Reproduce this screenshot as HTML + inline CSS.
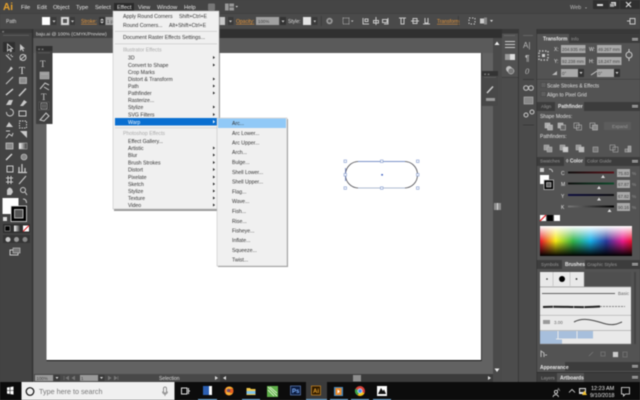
<!DOCTYPE html>
<html><head><meta charset="utf-8"><style>
html,body{margin:0;padding:0;width:640px;height:400px;overflow:hidden;background:#444}
svg{display:block;font-family:"Liberation Sans",sans-serif;filter:blur(.4px)}
.m{font-size:5.7px;fill:#e6e6e6}
.c{font-size:5px;fill:#ddd}
.o{font-size:5px;fill:#e8973a;text-decoration:underline}
.d{font-size:5.2px;fill:#333}
.h{font-size:5.2px;fill:#aaa}
.p{font-size:5px;fill:#e2e2e2}
.b{font-size:5px;fill:#e8e8e8;font-weight:bold}
.g{font-size:4.6px;fill:#999}
.v{font-size:4.4px;fill:#444}
.i{fill:none;stroke:#c9c9c9;stroke-width:1}
.f{fill:#c9c9c9}
</style></head><body>
<svg width="640" height="400" viewBox="0 0 640 400">
<defs>
<linearGradient id="sp" x1="0" x2="1" y1="0" y2="0">
<stop offset="0" stop-color="#e8112d"/><stop offset=".17" stop-color="#f6eb14"/><stop offset=".36" stop-color="#35b44a"/><stop offset=".55" stop-color="#16b0e8"/><stop offset=".72" stop-color="#2b3b9c"/><stop offset=".9" stop-color="#ec1c8c"/><stop offset="1" stop-color="#e8112d"/>
</linearGradient>
<linearGradient id="wh" x1="0" x2="0" y1="0" y2="1"><stop offset="0" stop-color="#fff"/><stop offset="1" stop-color="#fff" stop-opacity="0"/></linearGradient>
<linearGradient id="bk" x1="0" x2="0" y1="0" y2="1"><stop offset="0" stop-color="#000" stop-opacity="0"/><stop offset="1" stop-color="#000"/></linearGradient>
<linearGradient id="sc" x1="0" x2="1" y1="0" y2="0"><stop offset="0" stop-color="#111"/><stop offset="1" stop-color="#5a1018"/></linearGradient>
<linearGradient id="sm" x1="0" x2="1" y1="0" y2="0"><stop offset="0" stop-color="#111"/><stop offset="1" stop-color="#0f4a2a"/></linearGradient>
<linearGradient id="sy" x1="0" x2="1" y1="0" y2="0"><stop offset="0" stop-color="#101040"/><stop offset="1" stop-color="#111"/></linearGradient>
<linearGradient id="sk" x1="0" x2="1" y1="0" y2="0"><stop offset="0" stop-color="#777"/><stop offset="1" stop-color="#000"/></linearGradient>
<linearGradient id="gr" x1="0" x2="1" y1="0" y2="0"><stop offset="0" stop-color="#fff"/><stop offset="1" stop-color="#333"/></linearGradient>
</defs>

<!-- base -->
<rect width="640" height="400" fill="#484848"/>
<rect width="640" height="14" fill="#454545"/>
<rect y="13.5" width="640" height="1" fill="#3a3a3a"/>
<rect y="14" width="640" height="15" fill="#4a4a4a"/>

<!-- workspace -->
<rect x="33" y="29" width="470" height="353" fill="#626262"/>
<rect x="33" y="29" width="470" height="9" fill="#303030"/>
<rect x="33" y="29" width="82" height="9" fill="#424242"/>
<rect x="33" y="38" width="460" height="15" fill="#5a5a5a"/>
<text x="36" y="35.500" class="c" style="font-size:4.800px">baju.ai @ 100% (CMYK/Preview)</text>
<rect x="46.500" y="53" width="434.500" height="307" fill="#fff"/>
<rect x="46.500" y="360" width="434.500" height="1" fill="#111"/>
<rect x="481" y="53" width=".7" height="308" fill="#222"/>

<!-- shape -->
<rect x="345.500" y="161.500" width="72" height="26.500" rx="13" fill="#fff" stroke="#49494f" stroke-width=".8"/>
<path d="M358 161.500H405" stroke="#7b93c8" stroke-width=".9"/>
<path d="M358 188H405" stroke="#aebbd2" stroke-width="1.100"/>
<path d="M345.500 168V181" stroke="#5a70b8" stroke-width=".7"/>
<g fill="#fff" stroke="#7f97cc" stroke-width=".6">
<rect x="344" y="160" width="2.500" height="2.500"/><rect x="380.500" y="160" width="2.500" height="2.500"/><rect x="416.500" y="160" width="2.500" height="2.500"/>
<rect x="344" y="173.500" width="2.500" height="2.500"/><rect x="416.500" y="173.500" width="2.500" height="2.500"/>
<rect x="344" y="186.800" width="2.500" height="2.500"/><rect x="380.500" y="186.800" width="2.500" height="2.500"/><rect x="416.500" y="186.800" width="2.500" height="2.500"/>
</g>
<rect x="381.300" y="174" width="1.600" height="1.600" fill="#3d5fc0"/>

<!-- toolbar -->
<rect x="0" y="29" width="32" height="353" fill="#434343"/>
<rect x="32" y="29" width="1.200" height="353" fill="#2e2e2e"/>
<rect x="0" y="29" width="32" height="4" fill="#393939"/>
<text x="2" y="33" style="font-size:4px" fill="#ccc">«</text>
<rect x="3" y="35" width="26" height=".7" fill="#666"/>
<rect x="3" y="42" width="12" height="10" fill="#2f2f2f"/>
<!-- tool icons -->
<path d="M7.500 44V51L9.300 49.300 10.600 51.600 11.600 51 10.400 48.800 12.700 48.600Z" fill="none" stroke="#d6d6d6" stroke-width=".8"/>
<path d="M20 44V51L21.800 49.300 23 51.500 24 51 22.800 48.800 25 48.600Z" fill="#c9c9c9"/>
<path d="M6 55L11 60M11 54.500V56M13 56.500H11.500M8 54L9 55" class="i"/>
<circle cx="23" cy="57.500" r="3" class="i"/><path d="M20 60L26 55" class="i"/>
<path d="M6.500 73L9 70 11 66.500 13 68.500 10 71Z" class="f"/>
<text x="19" y="74" style="font-size:10px;font-family:'Liberation Serif',serif" fill="#ddd">T</text>
<path d="M6 84L13 77" class="i"/>
<rect x="19.500" y="77.500" width="7" height="6" fill="#8c8c8c" stroke="#c9c9c9" stroke-width=".7"/>
<path d="M6 95L13 89" stroke="#ddd" stroke-width="1.300"/>
<path d="M19 96L26 88.500" stroke="#ccc" stroke-width="1.500"/>
<path d="M6 105L9 100H13L11 105Z" class="f"/><path d="M20 106L24 100 27 102 23 106Z" class="f"/>
<path d="M6.500 112A3.500 3.500 0 1 0 10 109" class="i"/><rect x="19" y="111" width="7" height="5" class="i"/>
<path d="M6 127L9 122 13 127ZM8 120V122" class="f"/>
<path d="M19.500 121h7v7h-7z" stroke-dasharray="1.500 1" class="i"/>
<path d="M6 138L9 134 12 136 13 133M6 131H10" class="i"/><path d="M20 131H27V138L20 131Z" class="f"/>
<rect x="6" y="143" width="7" height="6" fill="#888" stroke="#ccc" stroke-width=".7"/><rect x="19" y="143" width="8" height="6" fill="url(#gr)" stroke="#bbb" stroke-width=".5"/>
<path d="M6 160L12 154" stroke="#ddd" stroke-width="1.300"/><circle cx="24" cy="157" r="3" fill="#888" stroke="#ccc" stroke-width=".6"/>
<rect x="7" y="166" width="6" height="6" class="i"/><path d="M19 172V167M22 172V164M25 172V168M18 172.500H27" stroke="#ccc" stroke-width="1.200"/>
<path d="M6 178H13M6 182H13M8 176V184M11 176V184" class="i"/><path d="M19 184L26 176" stroke="#ccc" stroke-width="1"/>
<path d="M7 195V190L8.500 188 10 187.500 12 189 13 192 11 195Z" class="f"/><circle cx="23" cy="190" r="2.500" class="i"/><path d="M25 192L27 195" class="i"/>
<rect x="2.500" y="198" width="16" height="16" fill="#fff"/>
<rect x="11" y="206" width="15.500" height="15.500" fill="#000" stroke="#e0e0e0" stroke-width=".8"/>
<rect x="14.500" y="209.500" width="8.500" height="8.500" fill="#555" stroke="#d0d0d0" stroke-width=".8"/>
<path d="M23 199C26 199 26.500 201 26.500 203" class="i"/>
<rect x="3" y="217" width="4" height="4" fill="#ddd"/>
<rect x="3" y="224" width="27" height="9" fill="#2e2e2e"/>
<rect x="5" y="226" width="5" height="5" fill="#000" stroke="#999" stroke-width=".6"/>
<rect x="14" y="225.500" width="6" height="6" fill="url(#gr)"/>
<rect x="23" y="225.500" width="6" height="6" fill="#fff"/><path d="M23 231.500L29 225.500" stroke="#e01f26" stroke-width="1"/>
<rect x="3" y="235" width="27" height="8" fill="#353535"/>
<circle cx="8" cy="239.500" r="2.500" class="f"/><circle cx="16.500" cy="239.500" r="2.500" fill="#999"/><circle cx="25" cy="239.500" r="2.500" fill="#888"/>
<rect x="10" y="250" width="8" height="5" class="i"/><rect x="13" y="248" width="7" height="5" fill="#777" stroke="#ccc" stroke-width=".6"/>

<!-- floating type panel -->
<rect x="36" y="46" width="16.500" height="78" fill="#3f3f3f"/>
<rect x="36" y="46" width="16.500" height="5" fill="#303030"/>
<text x="38" y="50.500" style="font-size:4px" fill="#ccc">« ×</text>
<rect x="38" y="52.500" width="12" height=".6" fill="#666"/>
<text x="40" y="67" style="font-size:9px;font-family:'Liberation Serif',serif" fill="#c8c8c8">T</text>
<path d="M40 72H49V79H40ZM41 74H48" fill="#999" stroke="#bbb" stroke-width=".6"/>
<path d="M40 89L45 83 49 85M44 87L49 90" class="i"/>
<text x="41" y="100" style="font-size:9px;font-family:'Liberation Serif',serif" fill="#c8c8c8">T</text>
<rect x="39" y="102" width="10" height="8" fill="#2e2e2e" stroke="#777" stroke-width=".4"/>
<path d="M41 103H47V109H41ZM43 104V108M45 104V108" stroke="#ccc" stroke-width=".6" fill="none"/>
<path d="M40 120L46 113 49 116 44 121Z" class="i"/>

<!-- menu bar -->
<text x="3" y="10" style="font-size:10px;font-weight:bold" fill="#e8a32c">Ai</text>
<text x="21" y="9" class="m">File</text><text x="37" y="9" class="m">Edit</text><text x="53" y="9" class="m">Object</text><text x="76" y="9" class="m">Type</text><text x="95" y="9" class="m">Select</text>
<rect x="114" y="3" width="20" height="9" fill="#2a2a2a"/>
<text x="117" y="9" class="m">Effect</text><text x="138" y="9" class="m">View</text><text x="157" y="9" class="m">Window</text><text x="184" y="9" class="m">Help</text>
<rect x="208" y="3.500" width="7" height="7" rx="1" fill="#777"/>
<rect x="225" y="3.500" width="9" height="7" fill="#999"/><path d="M229 3.500V10.500M229 7H234" stroke="#444" stroke-width=".7"/>
<path d="M235.500 6H238L236.700 7.500Z" fill="#ddd"/>
<text x="570" y="9" style="font-size:5.500px" fill="#bbb">Web</text>
<path d="M585 7.500H587L586 8.500Z" fill="#ccc"/>
<rect x="593" y="0" width="16" height="9" fill="#303030"/><rect x="609.500" y="0" width="10" height="9" fill="#303030"/><rect x="620" y="0" width="20" height="9" fill="#303030"/>
<rect x="597" y="4" width="6" height="2" fill="#ddd"/>
<rect x="611" y="2" width="5" height="4" fill="#ddd"/><rect x="609.800" y="3.500" width="4.500" height="3.500" fill="#aaa" stroke="#333" stroke-width=".4"/>
<path d="M626 2L631 7M631 2L626 7" stroke="#ddd" stroke-width="1.200"/>

<!-- control bar -->
<text x="6" y="23" class="c">Path</text>
<rect x="42" y="17" width="8" height="8" fill="#fff"/>
<rect x="51" y="17" width="5.500" height="8" fill="#3a3a3a"/><path d="M52.500 20.500H55.500L54 22.500Z" fill="#ccc"/>
<rect x="61" y="17" width="8" height="8" fill="#ddd" stroke="#999" stroke-width=".4"/><rect x="63" y="19" width="4" height="4" fill="#555"/>
<rect x="70" y="17" width="5" height="8" fill="#3a3a3a"/><path d="M71 20.500H74L72.500 22.500Z" fill="#ccc"/>
<text x="81" y="23" class="o">Stroke:</text>
<rect x="99" y="17" width="6" height="8" fill="#333"/><path d="M100 20.500L102 18.500 104 20.500M100 21.500L102 23.500 104 21.500" fill="#ccc"/>
<rect x="105.500" y="17" width="8" height="8" fill="#a5a5a5"/><text x="107" y="23" class="v">1 p</text>
<rect x="219" y="17" width="6" height="8" fill="#c8c8c8"/>
<rect x="228" y="17" width="5.500" height="8" fill="#3a3a3a"/><path d="M229 20.500H232L230.500 22.500Z" fill="#ccc"/>
<text x="236" y="23" class="o">Opacity:</text>
<rect x="256" y="17" width="23" height="8" fill="#a0a0a0"/><text x="258" y="23" class="v">100%</text>
<rect x="280" y="17" width="6" height="8" fill="#333"/><path d="M281.500 20.500H284.500L283 22.500Z" fill="#ccc"/>
<text x="288" y="23" class="c">Style:</text>
<rect x="303" y="17" width="8" height="8" fill="#e4e4e4"/>
<rect x="312" y="17" width="5.500" height="8" fill="#3a3a3a"/><path d="M313.500 20.500H316L314.800 22.500Z" fill="#ccc"/>
<rect x="321" y="16" width=".6" height="10" fill="#333"/>
<circle cx="329.500" cy="21" r="3.200" fill="#999"/><circle cx="329.500" cy="21" r="1.500" fill="#555"/>
<rect x="343" y="18" width="6" height="6" fill="none" stroke="#aaa" stroke-dasharray="1 .7"/><path d="M351 20.500H353.500L352.200 22Z" fill="#ccc"/>
<path d="M363 18V24H369M365 19H368V21.500H365Z" class="i"/>
<path d="M376 17V25M373.500 20.500H378.500V23H373.500Z" class="i"/>
<path d="M388 18V24H384M382.500 19.500H387V22.500H382.500Z" class="i"/>
<path d="M399 18H406M401 18V24H404V18" class="i"/>
<path d="M411 21H419M413 18.500H417V23.500H413Z" class="i"/>
<path d="M423 24H430M425 18V23H428V18" class="i"/>
<text x="437" y="23" class="o">Transform</text>
<rect x="458" y="16" width=".6" height="10" fill="#333"/>
<path d="M469 18H475V24H469Z" stroke-dasharray="1.500 1.500" class="i"/>
<rect x="480" y="18.500" width="6" height="5" fill="#ccc"/><rect x="484" y="17.500" width="3" height="7" fill="#888"/><path d="M490 20H493L491.500 22Z" fill="#ddd"/>
<path d="M627 21H630M630 18.500H635V24H630Z" class="i"/>

<!-- right scrollbar -->
<rect x="493" y="38" width="9" height="344" fill="#4a4a4a"/>
<path d="M494.500 45L497 41.500 499.500 45Z" fill="#eee"/>
<rect x="494" y="203" width="7" height="7" fill="#8e8e8e"/>
<rect x="497" y="203" width="1" height="7" fill="#ddd"/>
<path d="M494.500 368.500L497 372 499.500 368.500Z" fill="#eee"/>
<!-- float panel -->
<rect x="482" y="71" width="16" height="35" fill="#484848"/>
<rect x="482" y="71" width="16" height="5" fill="#333"/>
<text x="484" y="75.500" style="font-size:4px" fill="#ccc">« ×</text>
<rect x="484" y="77" width="12" height=".6" fill="#666"/>
<path d="M487 93L493 86.500" stroke="#ccc" stroke-width="1.500"/>
<rect x="486" y="98" width="9" height="3" fill="#999"/>

<!-- status bar -->
<rect x="34" y="374" width="459" height="8" fill="#484848"/>
<rect x="35" y="375" width="18" height="6" fill="#9a9a9a"/><text x="36.500" y="380" class="v">100%</text>
<rect x="54" y="375" width="6" height="6" fill="#3a3a3a"/><path d="M55.500 377H58.500L57 379Z" fill="#ddd"/>
<path d="M64 376V380M69 376L66 378 69 380M75 376L72 378 75 380" stroke="#777" stroke-width=".6" fill="#777"/>
<rect x="80" y="375" width="18" height="6" fill="#9a9a9a"/><text x="81" y="380" class="v">1</text>
<rect x="98.500" y="375" width="6" height="6" fill="#3a3a3a"/><path d="M100 377H103L101.500 379Z" fill="#ddd"/>
<path d="M108 376L111 378 108 380M114 376L117 378 114 380M118 376V380" stroke="#777" stroke-width=".6" fill="#777"/>
<text x="159" y="380" class="c">Selection</text>
<path d="M215 376L218 378 215 380Z" fill="#ddd"/>
<rect x="220" y="374" width="273" height="8" fill="#3b3b3b"/>
<path d="M226 376L223 378 226 380Z" fill="#ddd"/>
<rect x="353" y="375" width="8" height="6.500" fill="#8e8e8e"/>
<path d="M488 376L491 378 488 380Z" fill="#ddd"/>

<!-- panel columns -->
<rect x="502" y="29" width="138" height="353" fill="#4c4c4c"/>
<rect x="502" y="29" width="16" height="48" fill="#515151"/>
<rect x="518" y="29" width=".8" height="353" fill="#333"/>
<rect x="502" y="29" width="138" height="4.500" fill="#383838"/>
<rect x="502" y="77" width="16" height=".7" fill="#3a3a3a"/>
<rect x="519" y="29" width="18" height="353" fill="#4a4a4a"/>
<rect x="536.500" y="29" width=".8" height="353" fill="#2f2f2f"/>
<path d="M504 35.500H515" stroke="#777" stroke-width=".6"/><path d="M523 35.500H533" stroke="#777" stroke-width=".6"/>
<path d="M505 41.500H515M505 44.500H515M505 47.500H515" stroke="#ccc" stroke-width="1"/>
<rect x="505" y="54" width="10" height="6" fill="#999"/><rect x="510" y="54" width="5" height="6" fill="#ddd"/>
<circle cx="509" cy="69" r="3" fill="#bbb"/><circle cx="511" cy="71" r="3" fill="#777" stroke="#ddd" stroke-width=".5"/>
<text x="523" y="48" style="font-size:8px" fill="#bbb">A|</text>
<text x="525" y="61" style="font-size:8px;font-weight:bold" fill="#bbb">¶</text>
<text x="525" y="74" style="font-size:8.500px;font-style:italic;font-family:'Liberation Serif',serif" fill="#bbb">0</text>
<path d="M523 79.500H534" stroke="#333" stroke-width=".7"/>
<circle cx="526" cy="88" r="2.300" class="i"/><circle cx="531" cy="88" r="2.300" class="i"/>
<rect x="524" y="97" width="9" height="7" fill="#888" stroke="#bbb" stroke-width=".6"/>
<circle cx="526" cy="115" r="2" class="i"/><circle cx="532" cy="112" r="2" class="i"/>
<path d="M523 125H534" stroke="#333" stroke-width=".7"/>

<!-- main panels -->
<rect x="537" y="29" width="103" height="353" fill="#535353"/>
<rect x="537" y="29" width="103" height="5" fill="#383838"/>
<!-- transform -->
<rect x="537" y="34" width="103" height="9" fill="#3c3c3c"/>
<rect x="537" y="34" width="32" height="9" fill="#535353"/>
<text x="543" y="40.500" class="b">Transform</text>
<text x="571" y="40.500" class="g">Info</text>
<path d="M632 38.500H638M632 40H638" stroke="#ddd" stroke-width=".8"/>
<rect x="539" y="51" width="9" height="9" fill="none" stroke="#bbb" stroke-dasharray="1.500 1.500" stroke-width="1.500"/><rect x="542" y="54" width="3" height="3" fill="#ccc"/>
<text x="554" y="51" class="p">X:</text><text x="589" y="51" class="p">W:</text>
<text x="554" y="63" class="p">Y:</text><text x="589" y="63" class="p">H:</text>
<rect x="561" y="45" width="24.500" height="8" fill="#a9a9a9"/><text x="562" y="51" class="v">204.935 mm</text>
<rect x="597" y="45" width="24.500" height="8" fill="#a9a9a9"/><text x="598" y="51" class="v">49.267 mm</text>
<rect x="561" y="57" width="24.500" height="8" fill="#a9a9a9"/><text x="562" y="63" class="v">92.238 mm</text>
<rect x="597" y="57" width="24.500" height="8" fill="#a9a9a9"/><text x="598" y="63" class="v">18.247 mm</text>
<circle cx="629" cy="55" r="3" class="i"/><path d="M629 49V52M629 58V61" class="i"/>
<path d="M552 75L557 71V75Z" fill="#bbb"/><path d="M591 75L597 71" class="i"/>
<rect x="561" y="69" width="17" height="8" fill="#a9a9a9"/><text x="562" y="75" class="v">0°</text>
<rect x="578" y="69" width="6" height="8" fill="#333"/><path d="M579.500 72H582.500L581 74Z" fill="#ddd"/>
<rect x="597" y="69" width="17" height="8" fill="#a9a9a9"/><text x="598" y="75" class="v">0°</text>
<rect x="614" y="69" width="6" height="8" fill="#333"/><path d="M615.500 72H618.500L617 74Z" fill="#ddd"/>
<rect x="537" y="79" width="103" height=".6" fill="#3d3d3d"/>
<rect x="541" y="82.500" width="5" height="5" fill="#5f5f5f" stroke="#444" stroke-width=".5"/>
<text x="547" y="87.500" class="p">Scale Strokes &amp; Effects</text>
<rect x="541" y="91.500" width="5" height="5" fill="#5f5f5f" stroke="#444" stroke-width=".5"/>
<text x="547" y="96.500" class="p">Align to Pixel Grid</text>
<!-- pathfinder -->
<rect x="537" y="102" width="103" height="9" fill="#3c3c3c"/>
<rect x="555" y="102" width="29" height="9" fill="#535353"/>
<text x="541" y="108" class="g">Align</text><text x="558" y="108" class="b">Pathfinder</text>
<path d="M632 105.500H638M632 107H638" stroke="#ddd" stroke-width=".8"/>
<text x="540" y="118" class="p">Shape Modes:</text>
<g fill="#aaa" stroke="#ccc" stroke-width=".5">
<rect x="545" y="123" width="5" height="5"/><rect x="547.500" y="125" width="5" height="5"/>
<rect x="558" y="123" width="5" height="5"/><rect x="560.500" y="125" width="5" height="5" fill="#666"/>
<rect x="574" y="123" width="5" height="5" fill="none"/><rect x="576.500" y="125" width="5" height="5" fill="none"/>
<rect x="590" y="123" width="5" height="5" fill="none"/><rect x="592.500" y="125" width="5" height="5" fill="#888"/>
</g>
<rect x="604" y="122" width="27" height="8" fill="#5c5c5c"/><text x="612" y="128" class="g">Expand</text>
<text x="540" y="138" class="p">Pathfinders:</text>
<g fill="#999" stroke="#bbb" stroke-width=".5">
<rect x="544" y="145" width="5" height="5"/><rect x="547" y="147" width="5" height="5"/>
<rect x="560" y="145" width="5" height="5"/><rect x="563" y="147" width="5" height="5" fill="#ccc"/>
<rect x="576" y="145" width="5" height="5"/><rect x="579" y="147" width="5" height="5" fill="#bbb"/>
<rect x="593" y="147" width="5" height="5" fill="#777"/>
<rect x="610" y="145" width="5" height="5" fill="none"/><rect x="613" y="147" width="5" height="5" fill="none"/>
<rect x="628" y="146" width="3" height="6"/><rect x="625" y="149" width="3" height="3" fill="#777"/>
</g>
<!-- color -->
<rect x="537" y="157" width="103" height="9" fill="#3c3c3c"/>
<rect x="564" y="157" width="21" height="9" fill="#535353"/>
<text x="540" y="162.500" class="g">Swatches</text><text x="566" y="162.500" class="b">◊ Color</text><text x="587" y="162.500" class="g">Color Guide</text>
<path d="M632 160.500H638M632 162H638" stroke="#ddd" stroke-width=".8"/>
<rect x="540" y="168" width="4" height="4" fill="#ccc"/>
<path d="M549 169C552 169 552.500 171 552.500 172" class="i"/>
<rect x="540" y="175" width="9" height="9" fill="#fff"/>
<rect x="544" y="180" width="9.500" height="9.500" fill="#000" stroke="#ccc" stroke-width=".7"/><rect x="546.500" y="182.500" width="4.500" height="4.500" fill="#666" stroke="#ccc" stroke-width=".6"/>
<text x="561" y="175" class="p">C</text><text x="561" y="186" class="p">M</text><text x="561" y="198" class="p">Y</text><text x="561" y="209" class="p">K</text>
<rect x="568" y="171.500" width="46" height="2" fill="url(#sc)"/><rect x="568" y="182.500" width="46" height="2" fill="url(#sm)"/><rect x="568" y="194" width="46" height="2" fill="url(#sy)"/><rect x="568" y="205.500" width="46" height="2" fill="url(#sk)"/>
<path d="M601 178L603 175 605 178ZM597 189L599 186 601 189ZM597 200.500L599 197.500 601 200.500ZM607.500 212L609.500 209 611.500 212Z" fill="#ddd"/>
<rect x="617" y="169" width="13" height="8" fill="#a9a9a9"/><text x="618" y="175" class="v">75.83</text>
<rect x="617" y="180" width="13" height="8" fill="#a9a9a9"/><text x="618" y="186" class="v">67.87</text>
<rect x="617" y="192" width="13" height="8" fill="#a9a9a9"/><text x="618" y="198" class="v">67.82</text>
<rect x="617" y="203" width="13" height="8" fill="#a9a9a9"/><text x="618" y="209" class="v">90.16</text>
<text x="632" y="175" class="g">%</text><text x="632" y="186" class="g">%</text><text x="632" y="198" class="g">%</text><text x="632" y="209" class="g">%</text>
<rect x="540" y="215" width="6" height="6" fill="#fff"/><path d="M540 221L546 215" stroke="#e01f26" stroke-width="1.200"/>
<rect x="547" y="215" width="6" height="6" fill="#000"/><rect x="554" y="215" width="6" height="6" fill="#fff"/>
<rect x="540" y="226" width="92" height="30" fill="url(#sp)"/>
<rect x="540" y="226" width="92" height="15" fill="url(#wh)"/>
<rect x="540" y="241" width="92" height="15" fill="url(#bk)"/>
<!-- brushes -->
<rect x="537" y="260" width="103" height="9" fill="#3c3c3c"/>
<rect x="562" y="260" width="23" height="9" fill="#535353"/>
<text x="541" y="266" class="g">Symbols</text><text x="565" y="266" class="b">Brushes</text><text x="587" y="266" class="g">Graphic Styles</text>
<path d="M632 263.500H638M632 265H638" stroke="#ddd" stroke-width=".8"/>
<rect x="540" y="272" width="91" height="72" fill="#e9e9e9"/>
<rect x="584" y="272" width="47" height="14.500" fill="#4f4f4f"/>
<path d="M553 272V286M570 272V286M584 272V286" stroke="#aaa" stroke-width=".5"/>
<rect x="540" y="286.500" width="91" height=".8" fill="#999"/><rect x="540" y="315" width="91" height=".6" fill="#aaa"/><rect x="540" y="330" width="91" height="1" fill="#bbb"/>
<circle cx="547" cy="279" r=".8" fill="#222"/><circle cx="562" cy="279" r="3" fill="#000"/><circle cx="576.500" cy="279" r=".9" fill="#222"/>
<path d="M542 293.500H615" stroke="#333" stroke-width=".8"/>
<text x="618" y="295" style="font-size:4.500px" fill="#666">Basic</text>
<path d="M543 307C560 306 580 308 600 306.500" stroke="#222" stroke-width="2" fill="none" stroke-dasharray="10 .5 20 .5"/>
<path d="M600 306.500H625" stroke="#666" stroke-width=".7" stroke-dasharray="2 1"/>
<rect x="543" y="320" width="7" height="4" fill="#999"/>
<text x="554" y="324" style="font-size:4.500px" fill="#666">3.00</text>
<path d="M574 322C585 316 598 322 606 324 615 326 619 323 622 322" stroke="#444" stroke-width="1" fill="none"/>
<rect x="540" y="331" width="91" height="13" fill="#e9e9e9"/>
<path d="M540 331H593V339H562V344H540Z" fill="#a7bfdc"/>
<path d="M558 331V339M577 331V339M556 339H593" stroke="#e9e9e9" stroke-width="1"/>
<path d="M540 344H631" stroke="#888" stroke-width=".5"/>
<rect x="634" y="272" width="2" height="72" fill="#444"/>
<path d="M541 357V351L544 353V357M545 355H547" stroke="#bbb" stroke-width="1" fill="none"/>
<path d="M589 356L593 352M601 352H605V356H601ZM613 352H618V357H613ZM623 352H627V357H623Z" stroke="#777" stroke-width=".8" fill="none"/>
<rect x="613" y="352" width="5" height="5" fill="#ccc"/>
<!-- appearance / layers -->
<rect x="537" y="362" width="103" height="9" fill="#3c3c3c"/>
<rect x="537" y="362" width="28" height="9" fill="#535353"/>
<text x="540" y="369" class="b">Appearance</text>
<path d="M632 365.500H638M632 367H638" stroke="#ddd" stroke-width=".8"/>
<rect x="537" y="372" width="103" height="1" fill="#2f2f2f"/>
<rect x="537" y="373" width="103" height="9" fill="#3c3c3c"/>
<rect x="557" y="373" width="27" height="9" fill="#535353"/>
<text x="541" y="379.500" class="g">Layers</text><text x="560" y="379.500" class="b">Artboards</text>
<path d="M632 376.500H638M632 378H638" stroke="#ddd" stroke-width=".8"/>

<!-- Effect menu -->
<rect x="114" y="12" width="106" height="199" fill="#555" opacity=".6"/>
<rect x="113" y="11" width="106" height="198" fill="#f0f0f0" stroke="#bbb" stroke-width=".5"/>
<text x="123" y="18" class="d">Apply Round Corners</text><text x="179" y="18" class="d">Shift+Ctrl+E</text>
<text x="123" y="27" class="d">Round Corners...</text><text x="169" y="27" class="d">Alt+Shift+Ctrl+E</text>
<rect x="115" y="31" width="102" height=".7" fill="#c8c8c8"/>
<text x="123" y="39" class="d">Document Raster Effects Settings...</text>
<rect x="115" y="43.500" width="102" height=".7" fill="#c8c8c8"/>
<text x="123" y="51.500" class="h">Illustrator Effects</text>
<text x="128" y="59.500" class="d">3D</text>
<text x="128" y="67" class="d">Convert to Shape</text>
<text x="128" y="74" class="d">Crop Marks</text>
<text x="128" y="81" class="d">Distort &amp; Transform</text>
<text x="128" y="88" class="d">Path</text>
<text x="128" y="95" class="d">Pathfinder</text>
<text x="128" y="102" class="d">Rasterize...</text>
<text x="128" y="109" class="d">Stylize</text>
<text x="128" y="116.500" class="d">SVG Filters</text>
<rect x="115" y="118" width="102" height="7.500" fill="#0a6fd0"/>
<text x="128" y="124" class="d" style="fill:#fff">Warp</text>
<rect x="115" y="127.500" width="102" height=".7" fill="#d0d0d0"/>
<text x="123" y="135" class="h">Photoshop Effects</text>
<text x="128" y="143" class="d">Effect Gallery...</text>
<text x="128" y="150" class="d">Artistic</text>
<text x="128" y="157" class="d">Blur</text>
<text x="128" y="164.500" class="d">Brush Strokes</text>
<text x="128" y="171.500" class="d">Distort</text>
<text x="128" y="179" class="d">Pixelate</text>
<text x="128" y="186" class="d">Sketch</text>
<text x="128" y="193" class="d">Stylize</text>
<text x="128" y="200" class="d">Texture</text>
<text x="128" y="207" class="d">Video</text>
<g fill="#222">
<path d="M213 56L215 57.500 213 59ZM213 63.500L215 65 213 66.500ZM213 77.500L215 79 213 80.500ZM213 84.500L215 86 213 87.500ZM213 91.500L215 93 213 94.500ZM213 105.500L215 107 213 108.500ZM213 113L215 114.500 213 116Z"/>
<path d="M213 146.500L215 148 213 149.500ZM213 153.500L215 155 213 156.500ZM213 161L215 162.500 213 164ZM213 168L215 169.500 213 171ZM213 175.500L215 177 213 178.500ZM213 182.500L215 184 213 185.500ZM213 189.500L215 191 213 192.500ZM213 196.500L215 198 213 199.500ZM213 203.500L215 205 213 206.500Z"/>
</g>
<path d="M213 120L215 121.700 213 123.400Z" fill="#fff"/>

<!-- Warp submenu -->
<rect x="218" y="119" width="70" height="148" fill="#555" opacity=".6"/>
<rect x="217" y="118" width="70" height="148" fill="#f0f0f0" stroke="#bbb" stroke-width=".5"/>
<rect x="218" y="118.500" width="68" height="9.500" fill="#91c9f7"/>
<text x="232" y="125" class="d">Arc...</text>
<text x="232" y="135" class="d">Arc Lower...</text>
<text x="232" y="144.500" class="d">Arc Upper...</text>
<text x="232" y="154" class="d">Arch...</text>
<text x="232" y="164" class="d">Bulge...</text>
<text x="232" y="174" class="d">Shell Lower...</text>
<text x="232" y="183.600" class="d">Shell Upper...</text>
<text x="232" y="193.500" class="d">Flag...</text>
<text x="232" y="203" class="d">Wave...</text>
<text x="232" y="213" class="d">Fish...</text>
<text x="232" y="223" class="d">Rise...</text>
<text x="232" y="232.600" class="d">Fisheye...</text>
<text x="232" y="242" class="d">Inflate...</text>
<text x="232" y="252" class="d">Squeeze...</text>
<text x="232" y="261.600" class="d">Twist...</text>

<!-- taskbar -->
<rect x="0" y="382" width="640" height="18" fill="#0c0c0c"/>
<path d="M7 387.500L9.700 387.100V390.300H7ZM10.300 387L13.500 386.500V390.300H10.300ZM7 390.800H9.700V394L7 393.600ZM10.300 390.800H13.500V394.600L10.300 394.100Z" fill="#fff"/>
<rect x="21.500" y="382" width="153" height="18" fill="#f0f0f0"/>
<circle cx="30" cy="391.500" r="3.800" fill="none" stroke="#111" stroke-width="1.200"/>
<text x="39" y="394" style="font-size:7.200px" fill="#777">Type here to search</text>
<rect x="163.500" y="387" width="3" height="6" rx="1.500" fill="none" stroke="#777" stroke-width=".8"/><path d="M162.500 391.500C162.500 395 167.500 395 167.500 391.500M165 394V396" fill="none" stroke="#777" stroke-width=".7"/>
<path d="M181.500 388H187V394H181.500ZM188.500 388V394M188.500 391H190" stroke="#ddd" stroke-width="1" fill="none"/>
<rect x="203" y="386" width="9" height="9" fill="#fff"/><rect x="203" y="386" width="6" height="9" fill="#2b5fb3"/>
<rect x="198" y="399" width="19" height="1" fill="#76b9ed"/>
<circle cx="229" cy="391" r="4.500" fill="#e6601f"/><path d="M226 388C228 386 232 386 233.500 389 232 388 229 388.500 229 391 229 393 231 394 233 392.500 232 395.500 228 396 226 394Z" fill="#f9b233"/><circle cx="228.500" cy="390.500" r="1.800" fill="#3c2a8c" opacity=".7"/>
<path d="M246.500 388H250L251 389H255.500V395H246.500Z" fill="#f2c94c"/><rect x="246.500" y="391" width="9" height="3" fill="#7fc4ea"/>
<rect x="242" y="399" width="18" height="1" fill="#76b9ed"/>
<rect x="267" y="386" width="11" height="11" fill="#5fb04a"/><path d="M268 387L277 396M270 387L277 393M268 390L274 396" stroke="#d9efc9" stroke-width=".9"/>
<rect x="290.500" y="386" width="10" height="9" fill="#0c1c3f" stroke="#6f8fd0" stroke-width=".6"/><text x="292" y="393" style="font-size:6px;font-weight:bold" fill="#7fb3ff">Ps</text>
<rect x="306" y="382" width="21" height="18" fill="#3a3a3a"/><rect x="306" y="399" width="21" height="1" fill="#76b9ed"/>
<rect x="311.500" y="386" width="9" height="9" fill="#2e1a00" stroke="#d18c22" stroke-width=".7"/><text x="313" y="393" style="font-size:6px;font-weight:bold" fill="#e8a32c">Ai</text>
<rect x="334" y="387" width="9" height="9" fill="#4a87b8"/><rect x="335.500" y="388" width="6" height="7" fill="#ea8a2b"/><path d="M337.500 389.500L340 391.500 337.500 393.500Z" fill="#fff"/>
<rect x="330" y="399" width="18" height="1" fill="#76b9ed"/>
<circle cx="360" cy="391" r="5" fill="#d9433a"/><path d="M360 391L364.500 393.300A5 5 0 0 1 357.500 395.300Z" fill="#f5c518"/><path d="M360 391L357.500 395.300A5 5 0 0 1 355.300 388.800Z" fill="#3aa54a"/><circle cx="360" cy="391" r="2.200" fill="#4a8ef0" stroke="#eee" stroke-width=".7"/>
<rect x="351" y="399" width="18" height="1" fill="#76b9ed"/>
<rect x="377" y="386" width="10" height="10" fill="#fff"/><path d="M378 394L381 388 383 391 384 389.500 386 394Z" fill="#111"/>
<rect x="373" y="399" width="18" height="1" fill="#76b9ed"/>
<circle cx="556" cy="392" r="1.600" fill="none" stroke="#eee" stroke-width=".8"/><path d="M553 397C553.500 394 558 394 558.500 397" stroke="#eee" stroke-width=".8" fill="none"/><text x="557" y="391" style="font-size:4.500px" fill="#eee">A</text>
<path d="M569 392.500L572 389.500 575 392.500" fill="none" stroke="#ddd" stroke-width=".8"/>
<rect x="579" y="388" width="7" height="6" fill="#ddd"/><rect x="580" y="389" width="5" height="3" fill="#222"/><path d="M582 395L584.500 390.500 587 395Z" fill="#f2c230"/>
<text x="591" y="390" style="font-size:5.500px" fill="#eee">12:23 AM</text>
<text x="590" y="397" style="font-size:5.500px" fill="#eee">9/10/2018</text>
<path d="M621.500 387.500H629.500V394H625.500L623.500 396V394H621.500Z" fill="none" stroke="#eee" stroke-width=".8"/>
</svg>
</body></html>
